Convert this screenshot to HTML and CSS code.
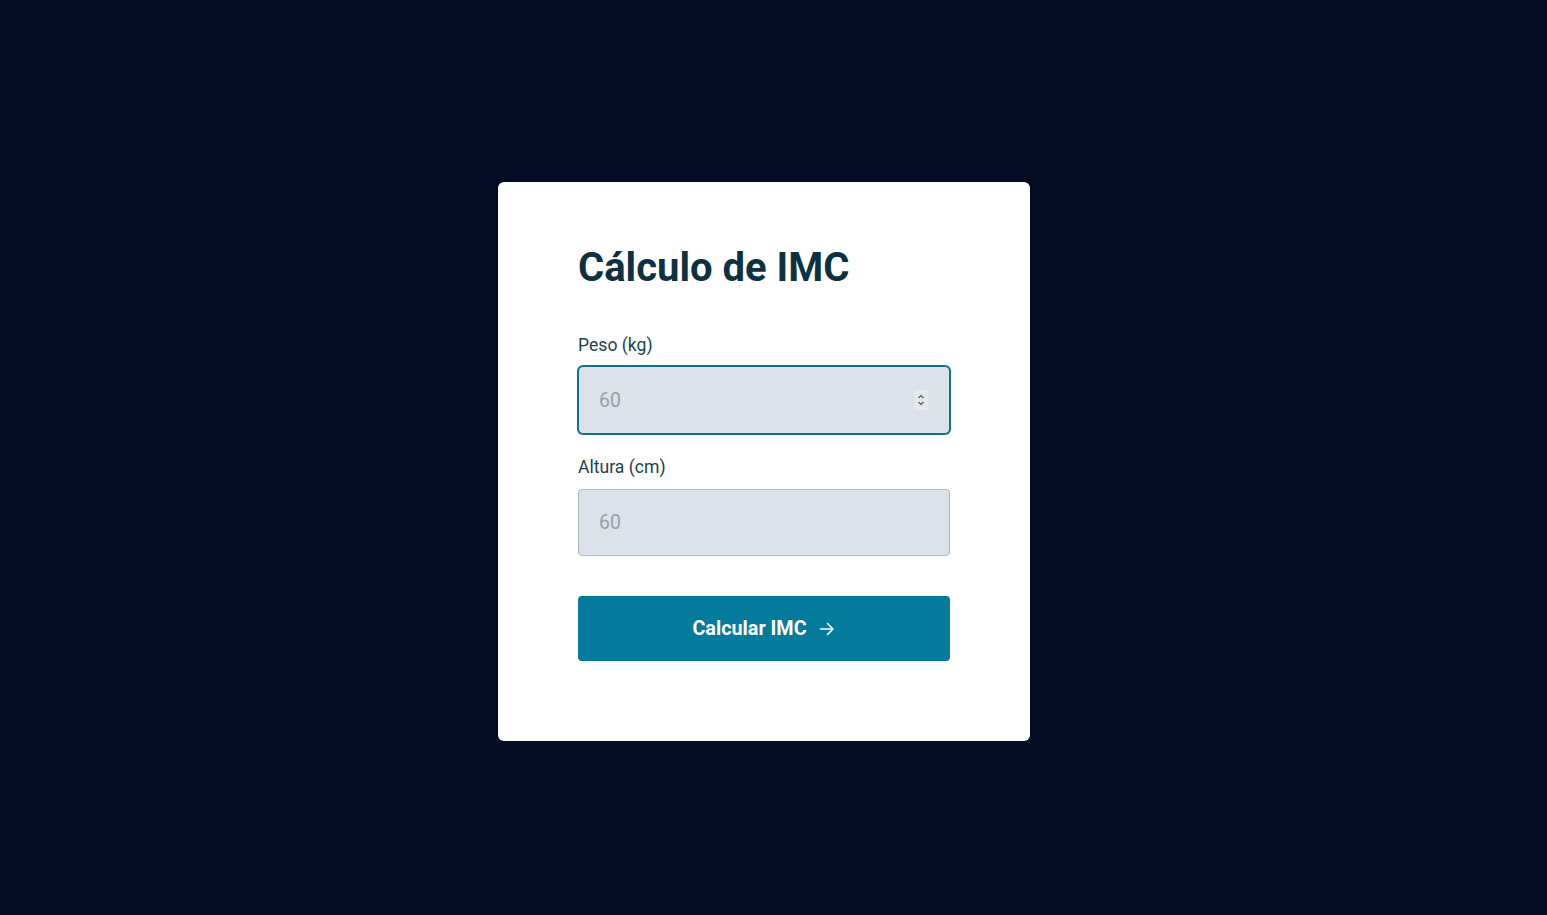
FILE: index.html
```html
<!DOCTYPE html>
<html lang="pt">
<head>
<meta charset="utf-8">
<title>Cálculo de IMC</title>
<link rel="stylesheet" href="styles.css">
</head>
<body>
<main class="page">
  <form class="card">
    <h1 class="title">Cálculo de IMC</h1>
    <label class="label" for="peso">Peso (kg)</label>
    <div class="field field-focused">
      <input class="input" id="peso" type="text" placeholder="60">
      <span class="spinner" aria-hidden="true">
        <svg width="10" height="16" viewBox="0 0 10 16"><path d="M2.5 6 L5 3.5 L7.5 6 M2.5 10 L5 12.5 L7.5 10" fill="none" stroke="#555" stroke-width="1.2"/></svg>
      </span>
    </div>
    <label class="label label-second" for="altura">Altura (cm)</label>
    <div class="field">
      <input class="input" id="altura" type="text" placeholder="60">
    </div>
    <button class="button" type="button">
      <span>Calcular IMC</span>
      <svg class="arrow" width="18" height="18" viewBox="0 0 18 18"><path d="M2.5 9 H15 M9.5 3.5 L15 9 L9.5 14.5" fill="none" stroke="#fff" stroke-width="1.6" stroke-linecap="round" stroke-linejoin="round"/></svg>
    </button>
  </form>
</main>
</body>
</html>
```
FILE: styles.css
```css
* { box-sizing: border-box; }
html, body { margin: 0; height: 100%; }
body {
  background: #030a24;
  font-family: Roboto, "Noto Sans", Arial, sans-serif;
}
.page {
  display: flex;
  justify-content: center;
  align-items: flex-start;
  padding: 182px 19px 0 0;
  min-height: 100%;
}
.card {
  width: 532px;
  height: 559px;
  background: #fff;
  border-radius: 6px;
  padding: 58px 80px 80px;
  display: flex;
  flex-direction: column;
}
.title {
  margin: 0 0 38px;
  font-size: 40px;
  font-weight: 700;
  color: #0d3140;
  line-height: 56px;
}
.label {
  font-size: 17.6px;
  color: #1c4446;
  line-height: 22px;
  margin-bottom: 10px;
}
.label-second { margin-bottom: 11px; }
.field {
  position: relative;
  height: 67px;
  border: 1px solid #b3b8bd;
  border-radius: 4px;
  background: #dce2e9;
  margin-bottom: 40px;
}
.field-focused {
  height: 68px;
  border: 1px solid #12708c;
  box-shadow: 0 0 0 1px #12708c;
  border-radius: 5px;
  margin-bottom: 22px;
}
.input {
  width: 100%;
  height: 100%;
  border: 0;
  background: transparent;
  padding: 0 20px;
  font-family: inherit;
  font-size: 19.4px;
  color: #333;
  outline: none;
}
.input::placeholder { color: #9a9ea3; }
.spinner {
  position: absolute;
  right: 21px;
  top: 50%;
  transform: translateY(-50%);
  width: 14px;
  height: 20px;
  background: #e6e9ec;
  display: flex;
  align-items: center;
  justify-content: center;
}
.button {
  height: 65px;
  border: 0;
  border-radius: 4px;
  background: #047a9c;
  color: #fff;
  font-family: inherit;
  font-size: 19.8px;
  font-weight: 700;
  display: flex;
  align-items: center;
  justify-content: center;
  gap: 11px;
  cursor: pointer;
}
.arrow { margin-top: 1px; }
```
